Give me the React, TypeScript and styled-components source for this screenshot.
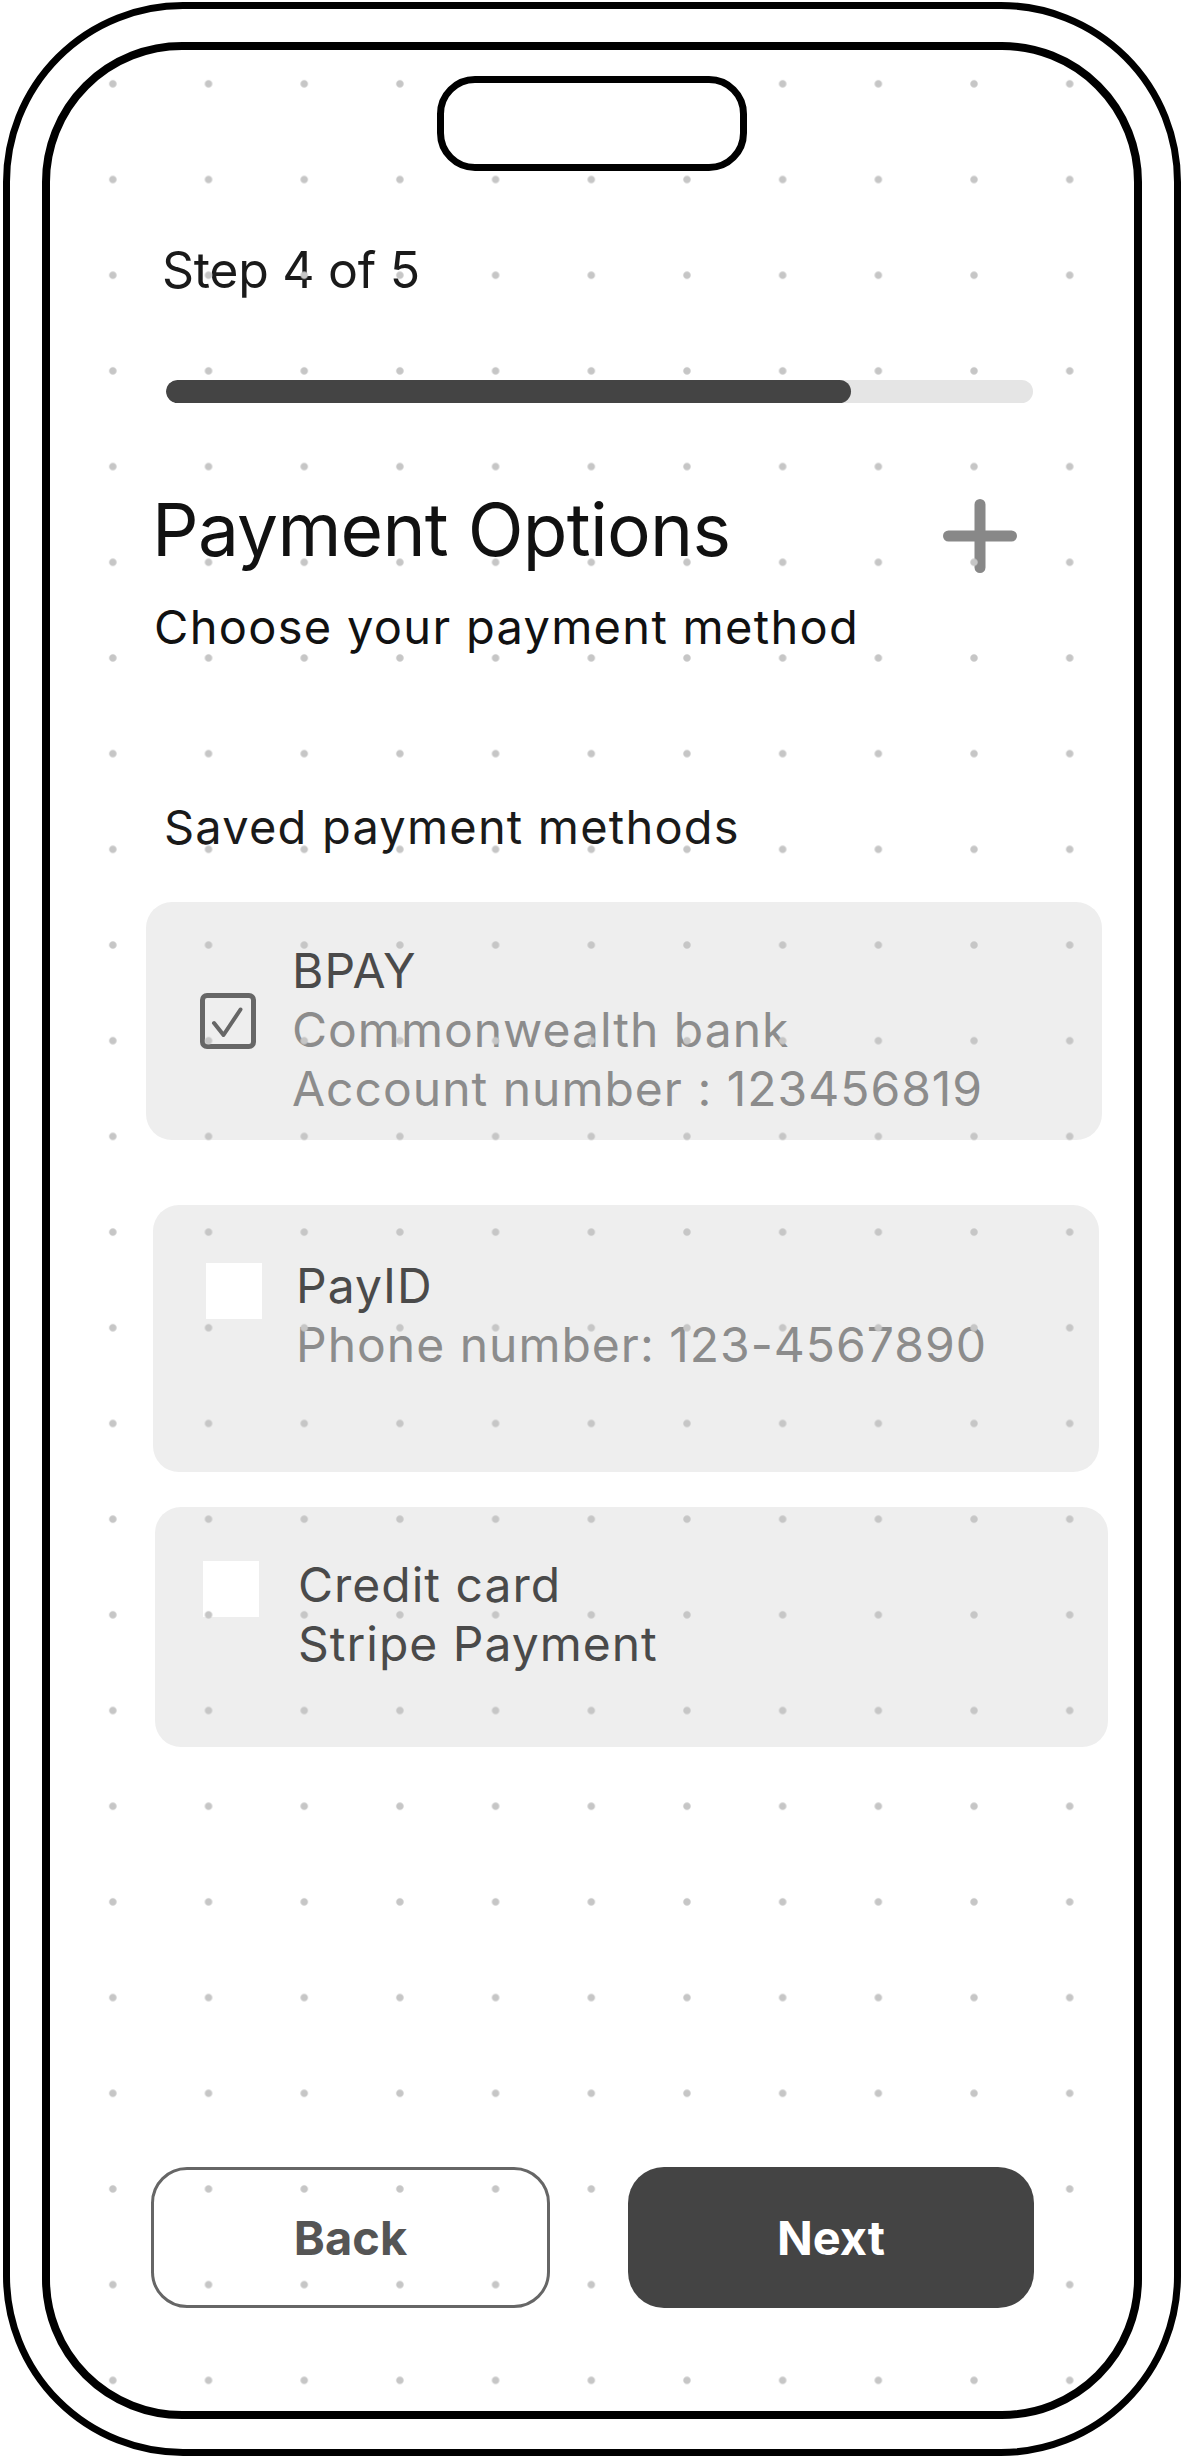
import React from "react";
import styled, { createGlobalStyle } from "styled-components";

const GlobalStyle = createGlobalStyle`
  * { box-sizing: border-box; }
  html, body { margin: 0; padding: 0; background: #fff; }
  body { font-family: Inter, "Noto Sans", sans-serif; }
`;

const Device = styled.div`
  width: 1178px;
  height: 2454px;
  margin: 2px 0 0 3px;
  border: 7px solid #000;
  border-radius: 180px;
  padding: 33px 32px 30px;
  display: flex;
  background: #fff;
`;

const Screen = styled.div`
  position: relative;
  flex: 1;
  border: 8px solid #000;
  border-radius: 140px;
  overflow: hidden;
  display: flex;
  flex-direction: column;
  padding: 26px 100px 103px;
  background: #fff;
`;

const DotGrid = styled.div`
  position: absolute;
  inset: 0;
  z-index: 2;
  pointer-events: none;
  background-image: radial-gradient(circle at center, #c6c6c6 0, #c6c6c6 3.2px, rgba(198, 198, 198, 0) 4.2px);
  background-size: 95.7px 95.7px;
  background-position: 15px -14px;
`;

const Notch = styled.div`
  position: relative;
  z-index: 3;
  align-self: center;
  width: 310px;
  height: 95px;
  border: 7px solid #000;
  border-radius: 38px;
  background: #fff;
`;

const StepLabel = styled.div`
  margin: 69px 0 0 12px;
  font-size: 50px;
  line-height: 60px;
  letter-spacing: -0.3px;
  color: #1a1a1a;
`;

const Track = styled.div`
  margin: 80px 0 0 16px;
  width: 867px;
  height: 23px;
  border-radius: 12px;
  background: #e5e5e5;
  overflow: hidden;
`;

const Fill = styled.div`
  height: 100%;
  border-radius: 12px;
  background: #444;
`;

const TitleRow = styled.div`
  margin-top: 83px;
  display: flex;
  justify-content: space-between;
  align-items: flex-start;
`;

const Title = styled.h1`
  margin: 0 0 0 2px;
  font-size: 73px;
  line-height: 88px;
  font-weight: 400;
  letter-spacing: -0.01em;
  color: #111;
`;

const PlusButton = styled.div`
  margin: 13px 17px 0 0;
  width: 74px;
  height: 74px;
  display: flex;
`;

const Subtitle = styled.p`
  margin: 25px 0 0 4px;
  font-size: 47px;
  line-height: 56px;
  letter-spacing: 1.3px;
  color: #111;
`;

const SectionLabel = styled.div`
  margin: 143px 0 0 14px;
  font-size: 47px;
  line-height: 58px;
  letter-spacing: 1.2px;
  color: #1a1a1a;
`;

const Card = styled.div<{ $top: number; $x: number; $w: number; $pt: number; $pb: number; $pl: number; $gap: number }>`
  display: flex;
  align-items: flex-start;
  margin-top: ${(p) => p.$top}px;
  margin-left: ${(p) => p.$x}px;
  width: ${(p) => p.$w}px;
  padding: ${(p) => p.$pt}px 24px ${(p) => p.$pb}px ${(p) => p.$pl}px;
  gap: ${(p) => p.$gap}px;
  background: #eeeeee;
  border-radius: 26px;
`;

const Check = styled.div<{ $checked: boolean; $mt: number }>`
  flex: none;
  width: 56px;
  height: 56px;
  margin-top: ${(p) => p.$mt}px;
  display: flex;
  align-items: center;
  justify-content: center;
  border: ${(p) => (p.$checked ? "5px solid #666" : "none")};
  border-radius: ${(p) => (p.$checked ? 7 : 0)}px;
  background: ${(p) => (p.$checked ? "transparent" : "#fff")};
`;

const CardText = styled.div`
  display: flex;
  flex-direction: column;
`;

const Line = styled.div<{ $muted?: boolean }>`
  font-size: 48px;
  line-height: 59px;
  letter-spacing: 1px;
  color: ${(p) => (p.$muted ? "#8c8c8c" : "#4a4a4a")};
  white-space: nowrap;
`;

const ButtonRow = styled.div`
  margin-top: auto;
  display: flex;
  justify-content: space-between;
  align-items: stretch;
`;

const Button = styled.button<{ $primary?: boolean; $w: number; $x: number }>`
  position: relative;
  z-index: ${(p) => (p.$primary ? 3 : 1)};
  width: ${(p) => p.$w}px;
  height: 141px;
  margin-left: ${(p) => p.$x}px;
  border-radius: 36px;
  border: ${(p) => (p.$primary ? "none" : "3px solid #666")};
  background: ${(p) => (p.$primary ? "#444" : "#fff")};
  color: ${(p) => (p.$primary ? "#fff" : "#555")};
  font-family: Inter, "Noto Sans", sans-serif;
  font-size: 47px;
  font-weight: 700;
  padding: 0;
  cursor: pointer;
`;

type Method = {
  lines: { text: string; muted?: boolean }[];
  checked: boolean;
  top: number;
  x: number;
  w: number;
  pt: number;
  pb: number;
  pl: number;
  gap: number;
  checkTop: number;
};

const methods: Method[] = [
  {
    lines: [
      { text: "BPAY" },
      { text: "Commonwealth bank", muted: true },
      { text: "Account number : 123456819", muted: true },
    ],
    checked: true,
    top: 46,
    x: -4,
    w: 956,
    pt: 39,
    pb: 22,
    pl: 54,
    gap: 36,
    checkTop: 52,
  },
  {
    lines: [{ text: "PayID" }, { text: "Phone number: 123-4567890", muted: true }],
    checked: false,
    top: 65,
    x: 3,
    w: 946,
    pt: 51,
    pb: 98,
    pl: 53,
    gap: 34,
    checkTop: 7,
  },
  {
    lines: [{ text: "Credit card" }, { text: "Stripe Payment" }],
    checked: false,
    top: 35,
    x: 5,
    w: 953,
    pt: 48,
    pb: 74,
    pl: 48,
    gap: 39,
    checkTop: 6,
  },
];

const PlusIcon = () => (
  <svg width="74" height="74" viewBox="0 0 74 74" fill="none">
    <path d="M37 5.5V68.5M5.5 37H68.5" stroke="#888" strokeWidth="11" strokeLinecap="round" />
  </svg>
);

const CheckMark = () => (
  <svg width="46" height="46" viewBox="0 0 46 46" fill="none">
    <path d="M9 25L18.5 37L35.5 11.5" stroke="#666" strokeWidth="4" strokeLinecap="round" strokeLinejoin="round" />
  </svg>
);

export default function App() {
  const progress = 0.79;
  return (
    <>
      <GlobalStyle />
      <Device>
        <Screen>
          <DotGrid />
          <Notch />
          <StepLabel>Step 4 of 5</StepLabel>
          <Track>
            <Fill style={{ width: `${progress * 100}%` }} />
          </Track>
          <TitleRow>
            <Title>Payment Options</Title>
            <PlusButton>
              <PlusIcon />
            </PlusButton>
          </TitleRow>
          <Subtitle>Choose your payment method</Subtitle>
          <SectionLabel>Saved payment methods</SectionLabel>
          {methods.map((m, i) => (
            <Card key={i} $top={m.top} $x={m.x} $w={m.w} $pt={m.pt} $pb={m.pb} $pl={m.pl} $gap={m.gap}>
              <Check $checked={m.checked} $mt={m.checkTop}>
                {m.checked && <CheckMark />}
              </Check>
              <CardText>
                {m.lines.map((l, j) => (
                  <Line key={j} $muted={l.muted}>
                    {l.text}
                  </Line>
                ))}
              </CardText>
            </Card>
          ))}
          <ButtonRow>
            <Button $w={399} $x={1}>Back</Button>
            <Button $primary $w={406} $x={0}>Next</Button>
          </ButtonRow>
        </Screen>
      </Device>
    </>
  );
}
